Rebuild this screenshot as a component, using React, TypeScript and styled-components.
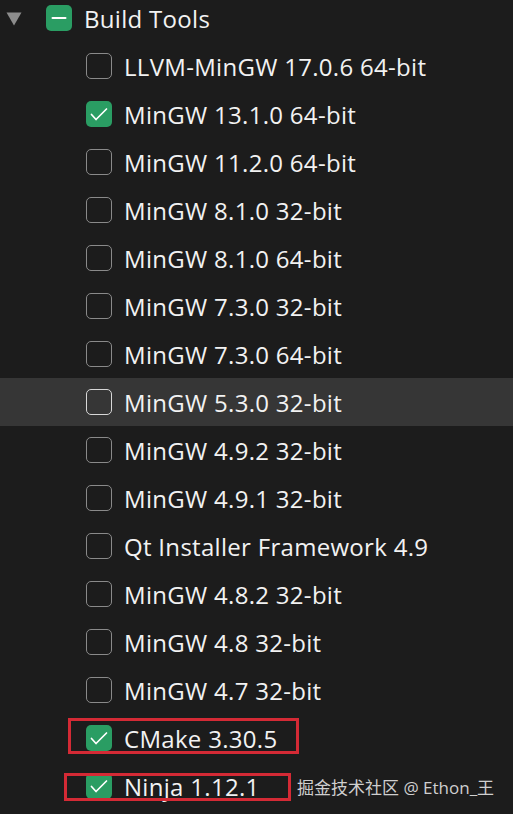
import React from "react";
import styled, { createGlobalStyle } from "styled-components";

const Global = createGlobalStyle`
  html, body { margin: 0; padding: 0; background: #1c1c1c; overflow: hidden; }
  body { font-family: "Open Sans", "Noto Sans CJK SC", sans-serif; }
`;

const Page = styled.div`
  width: 513px;
  height: 814px;
  position: relative;
  overflow: hidden;
  background: #1c1c1c;
`;

const List = styled.div`
  display: flex;
  flex-direction: column;
  margin-top: -6px;
`;

const Row = styled.div<{ $indent: number; $hover?: boolean }>`
  height: 48px;
  display: flex;
  align-items: center;
  padding-left: ${(p) => p.$indent}px;
  background: ${(p) => (p.$hover ? "#363636" : "transparent")};
  box-sizing: border-box;
`;

const Caret = styled.svg`
  width: 16px;
  height: 14px;
  margin-left: 6px;
  margin-right: 24px;
  margin-top: 2px;
`;

const Box = styled.div<{ $state: "off" | "on" | "mixed"; $hover?: boolean }>`
  width: 26px;
  height: 26px;
  box-sizing: border-box;
  border-radius: 5px;
  flex: none;
  display: flex;
  align-items: center;
  justify-content: center;
  background: ${(p) => (p.$state === "off" ? "transparent" : "#2a9d63")};
  border: ${(p) =>
    p.$state === "off" ? `1.5px solid ${p.$hover ? "#d8d8d8" : "#8a8a8a"}` : "none"};
`;

const Label = styled.span`
  color: #f2f2f2;
  font-size: 24px;
  margin-left: 12px;
  white-space: nowrap;
  letter-spacing: 0.3px;
`;

const Mark = styled.div<{ $left: number; $top: number; $w: number; $h: number }>`
  position: absolute;
  left: ${(p) => p.$left}px;
  top: ${(p) => p.$top}px;
  width: ${(p) => p.$w}px;
  height: ${(p) => p.$h}px;
  border: 3px solid #d42a35;
  box-sizing: border-box;
  pointer-events: none;
`;

const Watermark = styled.div`
  position: absolute;
  left: 297px;
  top: 774px;
  color: #cfcfcf;
  font-size: 17px;
  font-family: "Open Sans", "Noto Sans CJK SC", sans-serif;
  white-space: nowrap;
`;

const Check = () => (
  <svg width="26" height="26" viewBox="0 0 26 26">
    <path d="M5.5 13.5 L10 18.5 L20.5 8" fill="none" stroke="#fff" strokeWidth="1.7" strokeLinecap="round" strokeLinejoin="round" />
  </svg>
);

const Dash = () => (
  <svg width="26" height="26" viewBox="0 0 26 26">
    <path d="M6.5 13 H19.5" stroke="#fff" strokeWidth="2" strokeLinecap="round" />
  </svg>
);

type Item = { label: string; on?: boolean; hover?: boolean };

const items: Item[] = [
  { label: "LLVM-MinGW 17.0.6 64-bit" },
  { label: "MinGW 13.1.0 64-bit", on: true },
  { label: "MinGW 11.2.0 64-bit" },
  { label: "MinGW 8.1.0 32-bit" },
  { label: "MinGW 8.1.0 64-bit" },
  { label: "MinGW 7.3.0 32-bit" },
  { label: "MinGW 7.3.0 64-bit" },
  { label: "MinGW 5.3.0 32-bit", hover: true },
  { label: "MinGW 4.9.2 32-bit" },
  { label: "MinGW 4.9.1 32-bit" },
  { label: "Qt Installer Framework 4.9" },
  { label: "MinGW 4.8.2 32-bit" },
  { label: "MinGW 4.8 32-bit" },
  { label: "MinGW 4.7 32-bit" },
  { label: "CMake 3.30.5", on: true },
  { label: "Ninja 1.12.1", on: true },
];

export default function App() {
  return (
    <Page>
      <Global />
      <List>
        <Row $indent={0}>
          <Caret viewBox="0 0 16 14">
            <path d="M0.5 0.5 H15.5 L8 13.5 Z" fill="#8c8c8c" />
          </Caret>
          <Box $state="mixed">
            <Dash />
          </Box>
          <Label>Build Tools</Label>
        </Row>
        {items.map((it) => (
          <Row key={it.label} $indent={86} $hover={it.hover}>
            <Box $state={it.on ? "on" : "off"} $hover={it.hover}>
              {it.on && <Check />}
            </Box>
            <Label>{it.label}</Label>
          </Row>
        ))}
      </List>
      <Mark $left={68} $top={718} $w={231} $h={36} />
      <Mark $left={64} $top={773} $w={227} $h={28} />
      <Watermark>掘金技术社区 @ Ethon_王</Watermark>
    </Page>
  );
}
